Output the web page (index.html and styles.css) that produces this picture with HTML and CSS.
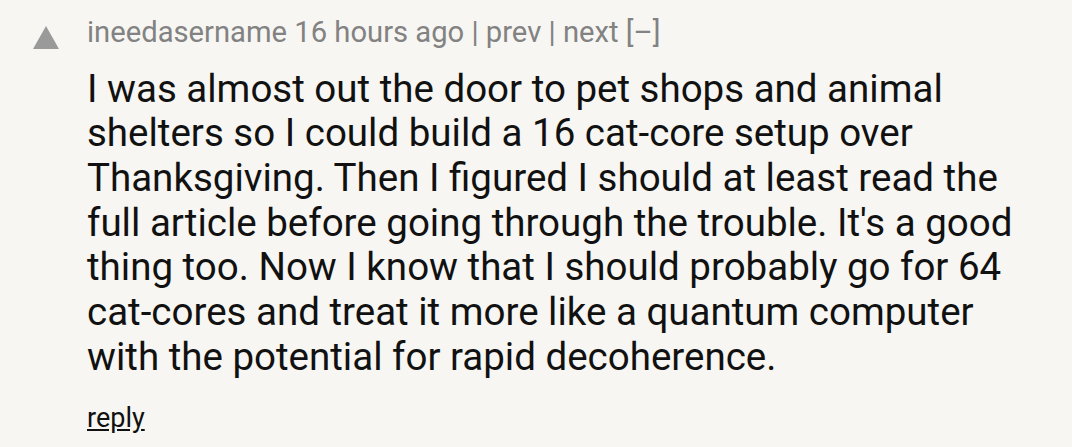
FILE: index.html
```html
<!DOCTYPE html>
<html>
<head>
<meta charset="utf-8">
<link rel="stylesheet" href="styles.css">
</head>
<body>
<div class="comment">
  <div class="vote"><span class="arrow"></span></div>
  <div class="main">
    <div class="head"><span class="user">ineedasername</span> <span class="age">16 hours ago</span> | <span>prev</span> | <span>next</span> <span class="toggle">[–]</span></div>
    <div class="text">I was almost out the door to pet shops and animal shelters so I could build a 16 cat-core setup over Thanksgiving. Then I figured I should at least read the full article before going through the trouble. It's a good thing too. Now I know that I should probably go for 64 cat-cores and treat it more like a quantum computer with the potential for rapid decoherence.</div>
    <div class="reply"><a>reply</a></div>
  </div>
</div>
</body>
</html>
```
FILE: styles.css
```css
html, body { margin: 0; padding: 0; background: #f7f6f2; }
body { font-family: Roboto, "Noto Sans", sans-serif; width: 1072px; height: 447px; overflow: hidden; }
.comment { display: flex; padding-top: 15px; }
.vote { width: 87px; padding-left: 33px; padding-top: 11px; box-sizing: border-box; }
.arrow { display: block; width: 0; height: 0; border-left: 13px solid transparent; border-right: 13px solid transparent; border-bottom: 23px solid #9a9a9a; }
.main { width: 945px; }
.head { color: #828282; font-size: 29.2px; line-height: 34px; }
.text { color: #111; font-size: 38.5px; line-height: 44.7px; margin-top: 17.5px; }
.reply { margin-top: 23.6px; font-size: 27px; line-height: 30px; }
.reply a { color: #111; text-decoration: underline; }
```
